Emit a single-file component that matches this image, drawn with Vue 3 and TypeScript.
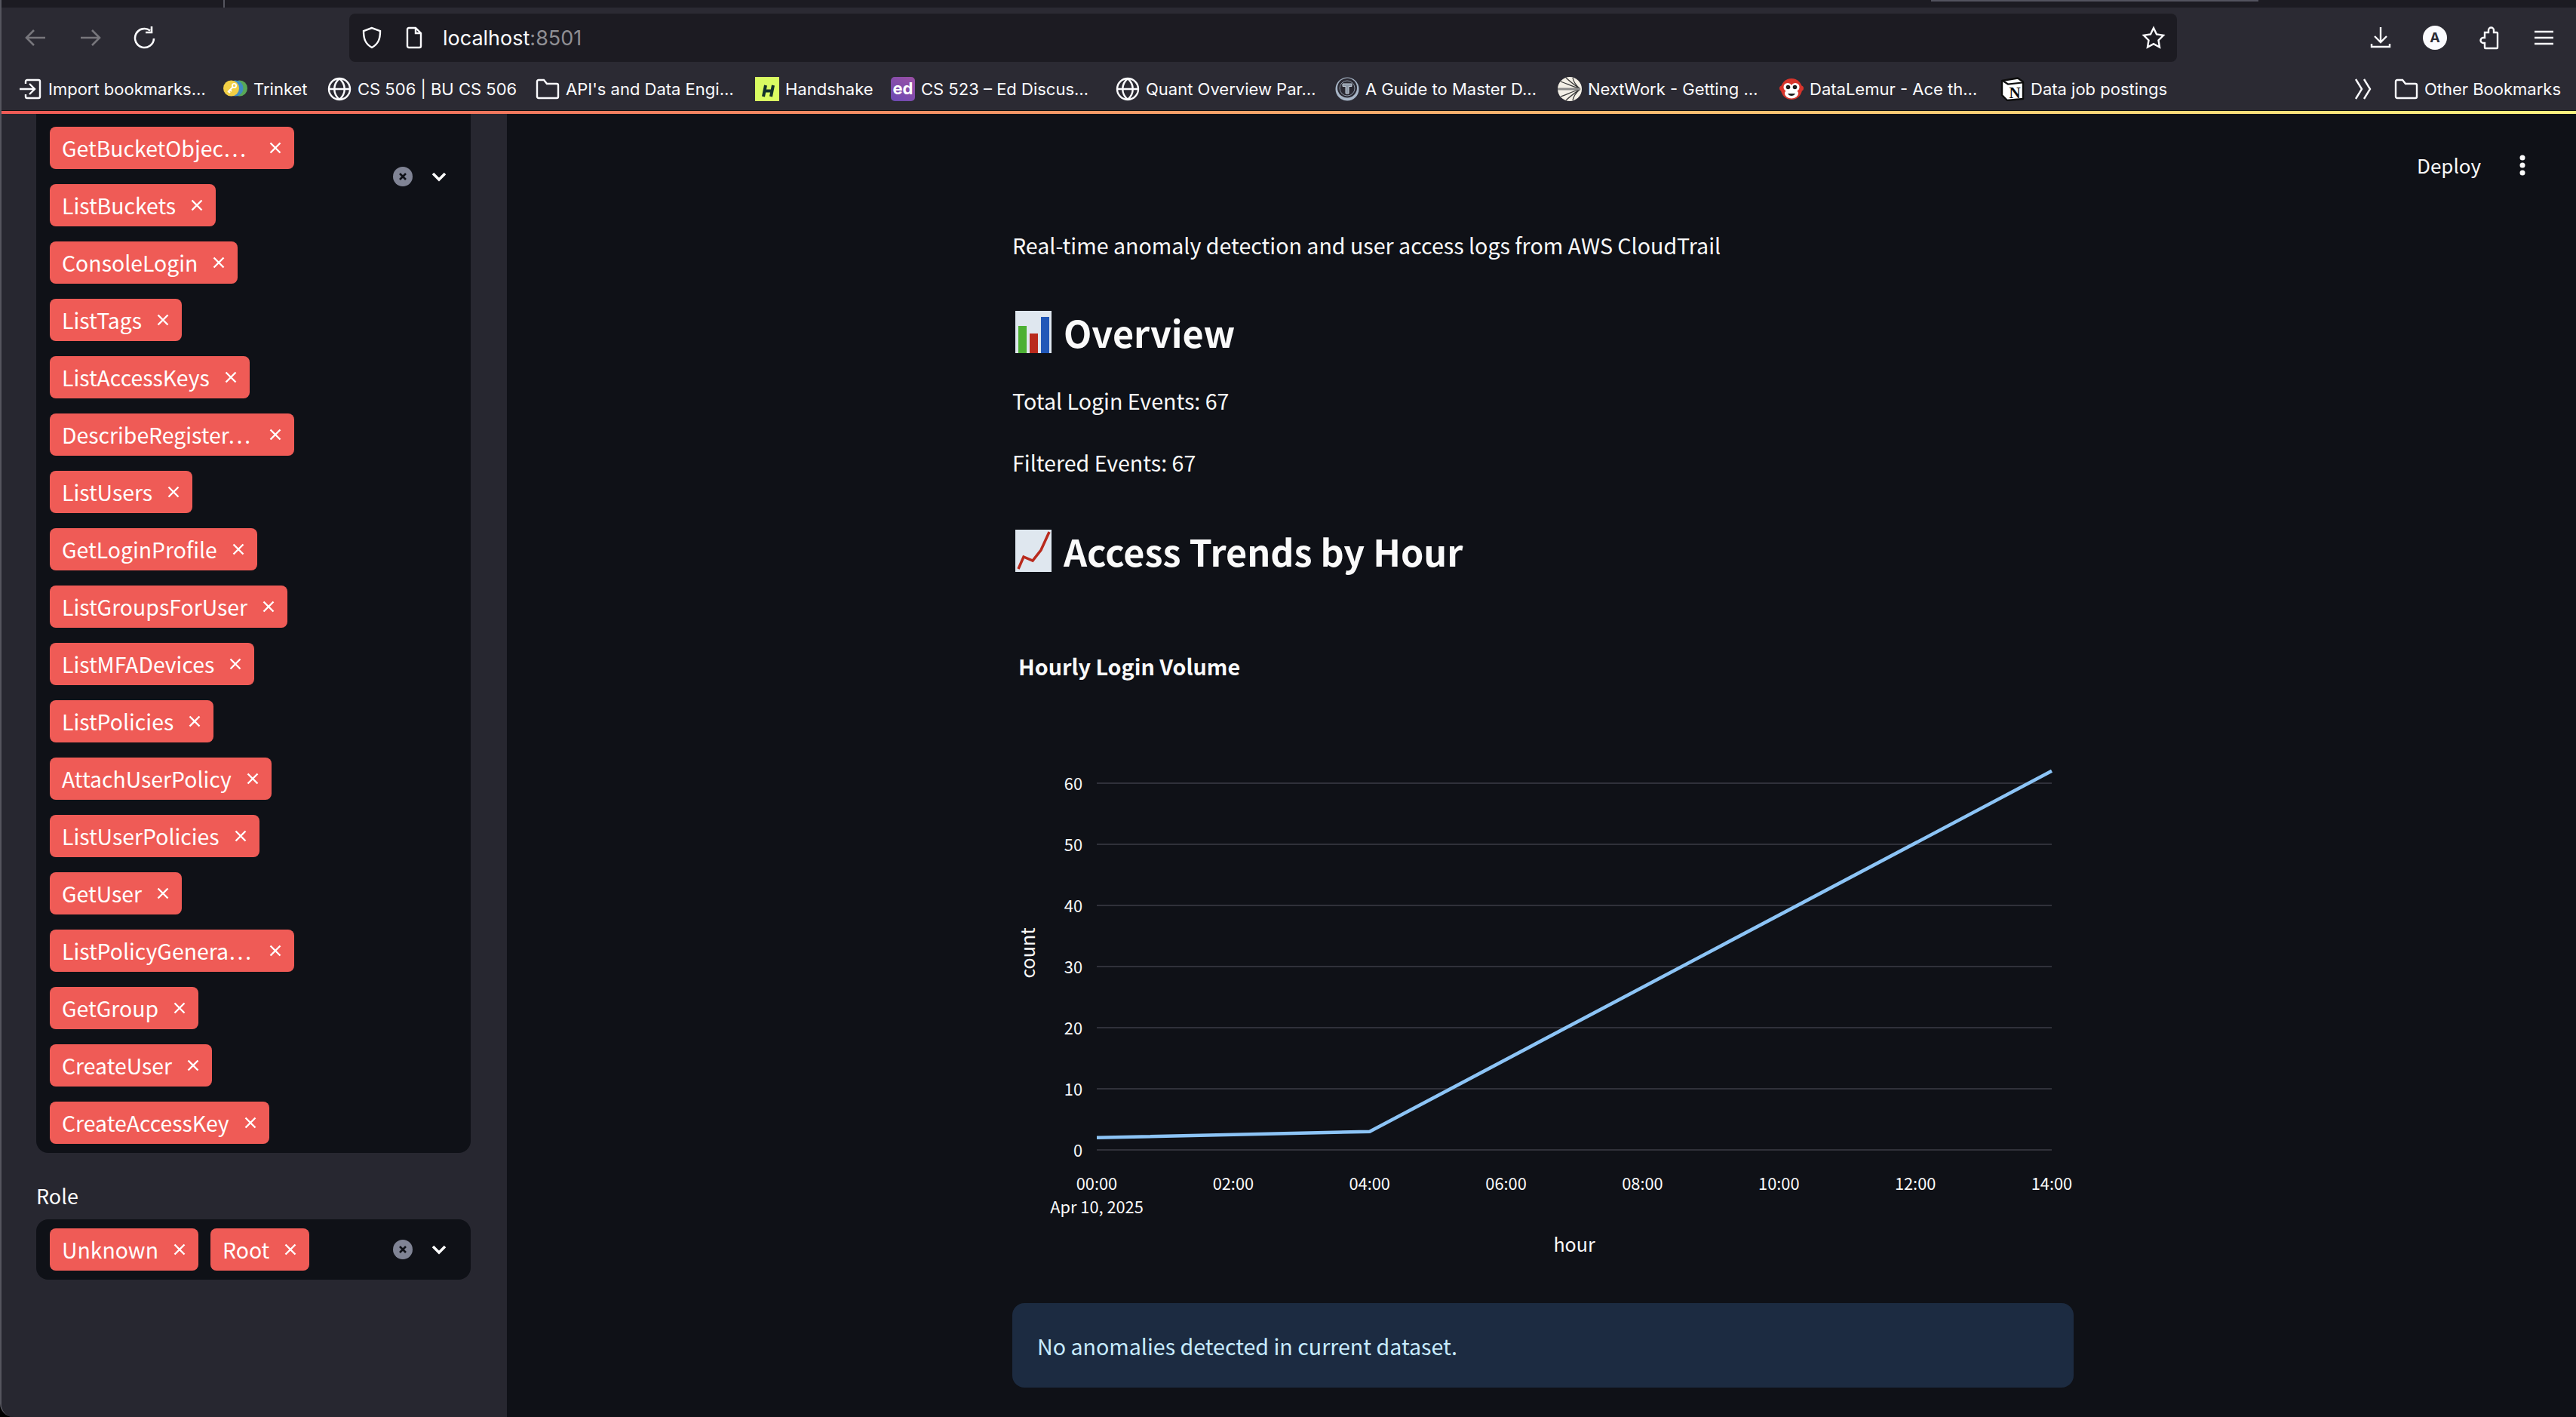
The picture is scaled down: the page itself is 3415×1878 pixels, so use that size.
<script setup lang="ts">
type Bookmark = { label: string; icon: string; width: number }

const bookmarks: Bookmark[] = [
  { label: 'Import bookmarks…', icon: 'import', width: 272 },
  { label: 'Trinket', icon: 'trinket', width: 138 },
  { label: 'CS 506 | BU CS 506', icon: 'globe', width: 276 },
  { label: "API's and Data Engi…", icon: 'folder', width: 291 },
  { label: 'Handshake', icon: 'handshake', width: 180 },
  { label: 'CS 523 – Ed Discus…', icon: 'ed', width: 298 },
  { label: 'Quant Overview Par…', icon: 'globe', width: 291 },
  { label: 'A Guide to Master D…', icon: 'tee', width: 295 },
  { label: 'NextWork - Getting …', icon: 'nextwork', width: 294 },
  { label: 'DataLemur - Ace th…', icon: 'lemur', width: 293 },
  { label: 'Data job postings', icon: 'notion', width: 240 },
]

const events = [
  'GetBucketObjec…', 'ListBuckets', 'ConsoleLogin', 'ListTags', 'ListAccessKeys',
  'DescribeRegister…', 'ListUsers', 'GetLoginProfile', 'ListGroupsForUser', 'ListMFADevices',
  'ListPolicies', 'AttachUserPolicy', 'ListUserPolicies', 'GetUser', 'ListPolicyGenera…',
  'GetGroup', 'CreateUser', 'CreateAccessKey',
]

const roles = ['Unknown', 'Root']

const chartLeft = 1454
const hourWidth = (2720 - chartLeft) / 14
const yFor = (v: number) => 1524 - v * 8.1
const yTicks = [0, 10, 20, 30, 40, 50, 60]
const xTicks = [0, 2, 4, 6, 8, 10, 12, 14].map((h) => ({
  x: chartLeft + h * hourWidth,
  label: String(h).padStart(2, '0') + ':00',
}))
const linePoints = [[0, 2], [4, 3], [14, 62]]
  .map(([h, v]) => `${chartLeft + h * hourWidth},${yFor(v)}`)
  .join(' ')
</script>

<template>
  <div class="window">
    <div class="tabstrip">
      <span class="tab-sep"></span>
      <span class="tab-active"></span>
    </div>

    <div class="toolbar">
      <div class="nav">
        <svg class="nav-icon dim" viewBox="0 0 32 32"><path d="M29 16H4M14 6 4 16l10 10" /></svg>
        <svg class="nav-icon dim" viewBox="0 0 32 32"><path d="M3 16h25M18 6l10 10-10 10" /></svg>
        <svg class="nav-icon reload" viewBox="0 0 32 32"><path d="M28 17A12.500 12.500 0 1 1 23 6.500M25 1v8h-8" /></svg>
      </div>
      <div class="urlbar">
        <svg class="url-icon shield" viewBox="0 0 32 32"><path d="M16 3 5 7c0 10 2 17 11 22 9-5 11-12 11-22z" /></svg>
        <svg class="url-icon page" viewBox="0 0 24 32"><path d="M5 3h9l7 7v17a2 2 0 0 1-2 2H5a2 2 0 0 1-2-2V5a2 2 0 0 1 2-2zM14 3v7h7" /></svg>
        <span class="url-text">localhost<span class="url-port">:8501</span></span>
        <svg class="star" viewBox="0 0 32 32"><path d="m16 3 4 8.500 9 1.300-6.500 6.500 1.500 9.200-8-4.400-8 4.400 1.500-9.200L3 12.800l9-1.300z" /></svg>
      </div>
      <div class="tools">
        <svg class="tool" viewBox="0 0 32 32"><path d="M16 2v20M8 14l8 8 8-8M4 24v4h24v-4" /></svg>
        <span class="account">A</span>
        <svg class="tool" viewBox="0 0 32 32"><path d="M10 9h5V6a3.500 3.500 0 0 1 7 0v3h4a1 1 0 0 1 1 1v19a1 1 0 0 1-1 1H11a1 1 0 0 1-1-1v-6H8a3.500 3.500 0 0 1 0-7h2z" /></svg>
        <svg class="tool" viewBox="0 0 32 32"><path d="M4 8h25M4 16h25M4 24h25" /></svg>
      </div>
    </div>

    <div class="bookmarks">
      <div
        v-for="b in bookmarks"
        :key="b.label"
        class="bookmark"
        :style="{ width: b.width + 'px' }"
      >
        <svg v-if="b.icon === 'import'" class="bm-icon line" viewBox="0 0 32 32">
          <path d="M10 9V6a2 2 0 0 1 2-2h15a2 2 0 0 1 2 2v20a2 2 0 0 1-2 2H12a2 2 0 0 1-2-2v-3M2 16h20M15 9l7 7-7 7" />
        </svg>
        <svg v-else-if="b.icon === 'trinket'" class="bm-icon" viewBox="0 0 32 32">
          <circle cx="21.500" cy="15" r="10.500" fill="#58a858" />
          <circle cx="16" cy="15" r="10.500" fill="#3f8cc4" />
          <circle cx="10.500" cy="15" r="10.500" fill="#f1cf45" />
          <path d="M13 13 6 20M7 19l2 2M9 17l2 2" stroke="#fff" stroke-width="1.800" fill="none" />
          <circle cx="14.500" cy="11.500" r="2.600" fill="none" stroke="#fff" stroke-width="1.800" />
        </svg>
        <svg v-else-if="b.icon === 'globe'" class="bm-icon line" viewBox="0 0 32 32">
          <circle cx="16" cy="16" r="14" />
          <path d="M2 16h28M16 2c-9 8-9 20 0 28M16 2c9 8 9 20 0 28" />
        </svg>
        <svg v-else-if="b.icon === 'folder'" class="bm-icon line" viewBox="0 0 32 32">
          <path d="M2 6a2 2 0 0 1 2-2h7l4 5h13a2 2 0 0 1 2 2v15a2 2 0 0 1-2 2H4a2 2 0 0 1-2-2z" />
        </svg>
        <svg v-else-if="b.icon === 'handshake'" class="bm-icon" viewBox="0 0 32 32">
          <rect width="32" height="32" fill="#d9fb62" />
          <path d="M14 11 11 26M24 11l-3 15M12 18.500h10" stroke="#12302c" stroke-width="4" fill="none" />
        </svg>
        <span v-else-if="b.icon === 'ed'" class="ed-icon">ed</span>
        <svg v-else-if="b.icon === 'tee'" class="bm-icon" viewBox="0 0 32 32">
          <circle cx="16" cy="16" r="15.500" fill="#a7b5c6" />
          <circle cx="16" cy="14.500" r="13" fill="#2b2a33" />
          <circle cx="16" cy="15" r="10" fill="none" stroke="#8b96a5" stroke-width="1" />
          <path d="M10 9h12v3.500h-4V22h-4v-9.500h-4z" fill="#8b96a5" stroke="#c3ccd7" stroke-width="1" />
        </svg>
        <svg v-else-if="b.icon === 'nextwork'" class="bm-icon" viewBox="0 0 32 32">
          <circle cx="16" cy="16" r="16" fill="#f3efe6" />
          <path d="M30 16C23 11 17 7 11 1M30 16C24 11 21 7 20 1M30 16C21 13 12 9 4 6M30 16C23 21 17 25 11 31M30 16C24 21 21 25 20 31M30 16C21 19 12 23 4 26" stroke="#3a3a3a" stroke-width="1.300" fill="none" />
          <path d="M0 16h30" stroke="#8a8a8a" stroke-width="3" />
        </svg>
        <svg v-else-if="b.icon === 'lemur'" class="bm-icon" viewBox="0 0 32 32">
          <circle cx="3.500" cy="15" r="3.500" fill="#d8352c" />
          <circle cx="28.500" cy="15" r="3.500" fill="#d8352c" />
          <circle cx="16" cy="16" r="14" fill="#d8352c" />
          <circle cx="11" cy="13.500" r="5.500" fill="#fff" />
          <circle cx="21" cy="13.500" r="5.500" fill="#fff" />
          <ellipse cx="16" cy="22" rx="9" ry="6.500" fill="#fff" />
          <circle cx="11.500" cy="13.500" r="2.800" fill="#1d1d1d" />
          <circle cx="20.500" cy="13.500" r="2.800" fill="#1d1d1d" />
          <path d="M11 22c2 4 8 4 10 0z" fill="#1d1d1d" />
        </svg>
        <svg v-else-if="b.icon === 'notion'" class="bm-icon" viewBox="0 0 32 32">
          <path d="M2 5 23 1.500l7 5V29L9 31l-7-7z" fill="#fff" stroke="#0d0d0d" stroke-width="2.400" stroke-linejoin="round" />
          <path d="M3 5l7 4.500 19-2" stroke="#0d0d0d" stroke-width="2.200" fill="none" />
          <text x="19" y="27.500" text-anchor="middle" class="notion-n">N</text>
        </svg>
        <span class="bm-label">{{ b.label }}</span>
      </div>
      <div class="bm-end">
        <svg class="chev-more" viewBox="0 0 26 32"><path d="M3 3l8 13-8 13M14 3l8 13-8 13" /></svg>
        <div class="bookmark other">
          <svg class="bm-icon line" viewBox="0 0 32 32">
            <path d="M2 6a2 2 0 0 1 2-2h7l4 5h13a2 2 0 0 1 2 2v15a2 2 0 0 1-2 2H4a2 2 0 0 1-2-2z" />
          </svg>
          <span class="bm-label">Other Bookmarks</span>
        </div>
      </div>
    </div>

    <div class="decoration"></div>

    <div class="app">
      <aside class="sidebar">
        <div class="select select-events">
          <div class="tags tags-column">
            <span v-for="e in events" :key="e" class="tag" :class="{ 'tag-full': e.endsWith('…') }">
              <span class="tag-text">{{ e }}</span>
              <svg class="tag-x" viewBox="0 0 16 16"><path d="M1.500 1.500l13 13M14.500 1.500l-13 13" /></svg>
            </span>
          </div>
          <div class="select-controls controls-offset">
            <span class="clear"><svg viewBox="0 0 16 16"><path d="M4 4l8 8M12 4l-8 8" /></svg></span>
            <svg class="chevron" viewBox="0 0 20 14"><path d="M2 3l8 8 8-8" /></svg>
          </div>
        </div>

        <label class="select-label">Role</label>
        <div class="select">
          <div class="tags">
            <span v-for="r in roles" :key="r" class="tag">
              <span class="tag-text">{{ r }}</span>
              <svg class="tag-x" viewBox="0 0 16 16"><path d="M1.500 1.500l13 13M14.500 1.500l-13 13" /></svg>
            </span>
          </div>
          <div class="select-controls">
            <span class="clear"><svg viewBox="0 0 16 16"><path d="M4 4l8 8M12 4l-8 8" /></svg></span>
            <svg class="chevron" viewBox="0 0 20 14"><path d="M2 3l8 8 8-8" /></svg>
          </div>
        </div>
      </aside>

      <main class="main">
        <div class="app-header">
          <span class="deploy">Deploy</span>
          <svg class="kebab" viewBox="0 0 8 28"><circle cx="4" cy="4" r="3.500" /><circle cx="4" cy="14" r="3.500" /><circle cx="4" cy="24" r="3.500" /></svg>
        </div>

        <div class="content">
          <p class="intro">Real-time anomaly detection and user access logs from AWS CloudTrail</p>

          <h3 class="heading h-overview">
            <svg class="emoji" viewBox="0 0 48 56">
              <rect width="48" height="56" fill="#dfe7ef" />
              <rect x="4" y="20" width="11" height="36" fill="#4cb033" />
              <rect x="19" y="30" width="11" height="26" fill="#b92a1d" />
              <rect x="34" y="8" width="11" height="48" fill="#2258b8" />
            </svg>
            Overview
          </h3>

          <p class="stat">Total Login Events: 67</p>
          <p class="stat">Filtered Events: 67</p>

          <h3 class="heading h-trends">
            <svg class="emoji" viewBox="0 0 48 56">
              <rect width="48" height="56" fill="#dfe7ef" />
              <path d="M4 52l7-16 12 5 11-14 11-24" stroke="#b92a1d" stroke-width="3.500" fill="none" />
            </svg>
            Access Trends by Hour
          </h3>

          <svg class="chart" viewBox="1342 820 1407 860">
            <text x="1350" y="895" class="chart-title">Hourly Login Volume</text>
            <line
              v-for="t in yTicks"
              :key="t"
              class="grid"
              :x1="chartLeft"
              x2="2720"
              :y1="yFor(t)"
              :y2="yFor(t)"
            />
            <text
              v-for="t in yTicks"
              :key="'y' + t"
              x="1435"
              :y="yFor(t) + 9"
              text-anchor="end"
              class="tick"
            >{{ t }}</text>
            <text
              v-for="t in xTicks"
              :key="t.label"
              :x="t.x"
              y="1577"
              text-anchor="middle"
              class="tick"
            >{{ t.label }}</text>
            <text x="1454" y="1608" text-anchor="middle" class="tick">Apr 10, 2025</text>
            <text x="2087" y="1659" text-anchor="middle" class="axis-title">hour</text>
            <text x="1372" y="1263" text-anchor="middle" transform="rotate(-90 1372 1263)" class="axis-title">count</text>
            <polyline class="series" :points="linePoints" />
          </svg>

          <div class="alert">No anomalies detected in current dataset.</div>
        </div>
      </main>
    </div>
  </div>
</template>

<style>
html, body { margin: 0; background: #000; }
</style>

<style scoped>
.window {
  width: 3415px;
  height: 1878px;
  overflow: hidden;
  display: flex;
  flex-direction: column;
  background: #0f1117;
  color: #fafafa;
  border-left: 2px solid #55555e;
  border-radius: 0 0 0 18px;
  box-sizing: border-box;
  font-family: "Noto Sans CJK SC", "Source Sans Pro", sans-serif;
}

/* firefox chrome */
.tabstrip {
  height: 10px;
  flex: none;
  background: #1c1b22;
  position: relative;
}
.tab-sep {
  position: absolute;
  left: 294px;
  top: 0;
  width: 2px;
  height: 10px;
  background: #55555e;
}
.tab-active {
  position: absolute;
  left: 2558px;
  top: 0;
  width: 434px;
  height: 2px;
  background: #52525e;
}
.toolbar {
  height: 80px;
  flex: none;
  display: flex;
  align-items: center;
  background: #2b2a33;
  font-family: Inter, sans-serif;
}
.nav {
  width: 461px;
  flex: none;
  display: flex;
  align-items: center;
  gap: 41px;
  padding-left: 29px;
  box-sizing: border-box;
}
.nav-icon {
  width: 32px;
  height: 32px;
  fill: none;
  stroke: #fbfbfe;
  stroke-width: 2.600;
}
.nav-icon.dim { stroke: #77767c; }
.nav-icon.reload { margin-left: -1px; }
.urlbar {
  width: 2423px;
  height: 64px;
  flex: none;
  display: flex;
  align-items: center;
  box-sizing: border-box;
  background: #1c1b22;
  border-radius: 8px;
  padding-left: 14px;
}
.url-icon {
  height: 32px;
  fill: none;
  stroke: #fbfbfe;
  stroke-width: 2.400;
}
.shield { width: 32px; }
.page { width: 24px; margin-left: 28px; }
.url-text {
  margin-left: 26px;
  font-size: 27px;
  color: #fbfbfe;
}
.url-port { color: #8f8f94; }
.star {
  width: 32px;
  height: 32px;
  margin-left: auto;
  margin-right: 15px;
  fill: none;
  stroke: #fbfbfe;
  stroke-width: 2.400;
}
.tools {
  flex: 1;
  display: flex;
  align-items: center;
  gap: 40px;
  padding-left: 254px;
}
.tool {
  width: 32px;
  height: 32px;
  fill: none;
  stroke: #fbfbfe;
  stroke-width: 2.400;
}
.account {
  width: 32px;
  height: 32px;
  border-radius: 50%;
  background: #fbfbfe;
  color: #2b2a33;
  font-size: 18px;
  font-weight: 700;
  text-align: center;
  line-height: 32px;
}
.bookmarks {
  height: 56px;
  flex: none;
  display: flex;
  align-items: center;
  padding-left: 22px;
  background: #2b2a33;
  border-bottom: 1px solid #111;
  box-sizing: content-box;
  font-family: Inter, sans-serif;
  font-size: 22px;
  color: #fbfbfe;
}
.bookmark {
  display: flex;
  align-items: center;
  gap: 8px;
  flex: none;
}
.bm-icon {
  width: 32px;
  height: 32px;
  flex: none;
}
.bm-icon.line {
  fill: none;
  stroke: #fbfbfe;
  stroke-width: 2.400;
}
.notion-n {
  font-family: "Liberation Serif", serif;
  font-size: 21px;
  font-weight: 700;
  fill: #0d0d0d;
}
.ed-icon {
  width: 32px;
  height: 32px;
  flex: none;
  border-radius: 5px;
  background: linear-gradient(35deg, #6a4ab3, #9c4fa5);
  color: #fff;
  font-size: 22px;
  font-weight: 700;
  line-height: 30px;
  text-align: center;
}
.bm-label { white-space: nowrap; }
.bm-end {
  margin-left: auto;
  display: flex;
  align-items: center;
  gap: 28px;
  padding-right: 20px;
}
.chev-more {
  width: 26px;
  height: 32px;
  fill: none;
  stroke: #fbfbfe;
  stroke-width: 2.400;
}
.decoration {
  height: 4px;
  flex: none;
  background: linear-gradient(90deg, #ee5a55, #fdf27f);
}

/* streamlit */
.app {
  flex: 1;
  min-height: 0;
  display: flex;
}
.sidebar {
  width: 670px;
  flex: none;
  box-sizing: border-box;
  background: #272730;
  padding: 0 48px 0 46px;
}
.select {
  display: flex;
  background: #0f1117;
  border-radius: 16px;
  padding: 12px 0 12px 18px;
}
.select-events {
  padding-top: 17px;
  border-radius: 0 0 16px 16px;
}
.tags {
  flex: 1;
  min-width: 0;
  display: flex;
  gap: 16px;
}
.tags-column {
  flex-direction: column;
  align-items: flex-start;
  gap: 20px;
}
.tag {
  height: 56px;
  display: inline-flex;
  align-items: center;
  box-sizing: border-box;
  padding: 0 17px 2px 16px;
  border-radius: 8px;
  background: #ef5b56;
  color: #fff;
  font-size: 28.400px;
  white-space: nowrap;
}
.tag-full { width: 324px; }
.tag-x {
  width: 16px;
  height: 16px;
  margin-top: 2px;
  margin-left: 20px;
  flex: none;
  fill: none;
  stroke: #fff;
  stroke-width: 2.400;
}
.tag-full .tag-x { margin-left: auto; }
.select-controls {
  display: flex;
  align-items: center;
  gap: 25px;
  width: 103px;
  flex: none;
  height: 56px;
}
.controls-offset { margin-top: 38px; }
.clear {
  width: 26px;
  height: 26px;
  border-radius: 50%;
  background: #808495;
  display: flex;
  align-items: center;
  justify-content: center;
}
.clear svg {
  width: 16px;
  height: 16px;
  fill: none;
  stroke: #0f1117;
  stroke-width: 2.600;
}
.chevron {
  width: 20px;
  height: 14px;
  fill: none;
  stroke: #fff;
  stroke-width: 3.500;
}
.select-label {
  display: block;
  margin: 40px 0 14px;
  font-size: 27px;
  line-height: 34px;
}

.main {
  flex: 1;
  min-width: 0;
  position: relative;
}
.app-header {
  position: absolute;
  top: 49px;
  right: 67px;
  display: flex;
  align-items: center;
  gap: 51px;
  font-size: 26px;
}
.kebab {
  width: 8px;
  height: 28px;
  fill: #fafafa;
}
.content {
  width: 1407px;
  margin-left: 670px;
  padding-top: 148px;
}
.intro, .stat {
  margin: 0;
  font-size: 28.600px;
  line-height: 52px;
}
.stat { margin-top: 30px; }
.heading {
  margin: 0;
  display: flex;
  align-items: center;
  gap: 16px;
  font-size: 48.500px;
  font-weight: 600;
  line-height: 70px;
}
.h-overview { margin-top: 54px; }
.h-trends { margin-top: 56px; }
.emoji {
  width: 48px;
  height: 56px;
  margin-left: 4px;
  flex: none;
}
.chart {
  display: block;
  width: 1407px;
  height: 860px;
  margin-top: 55px;
  font-family: inherit;
}
.chart-title {
  font-size: 28.700px;
  font-weight: 700;
  fill: #fafafa;
}
.grid {
  stroke: #30313a;
  stroke-width: 2;
}
.tick {
  font-size: 21.800px;
  fill: #fafafa;
}
.axis-title {
  font-size: 25px;
  fill: #fafafa;
}
.series {
  fill: none;
  stroke: #8cc4f6;
  stroke-width: 4.500;
}
.alert {
  height: 112px;
  margin-top: 47px;
  box-sizing: border-box;
  padding: 0 33px;
  display: flex;
  align-items: center;
  border-radius: 16px;
  background: #1c2b41;
  color: #c7ebff;
  font-size: 28.600px;
}
</style>
